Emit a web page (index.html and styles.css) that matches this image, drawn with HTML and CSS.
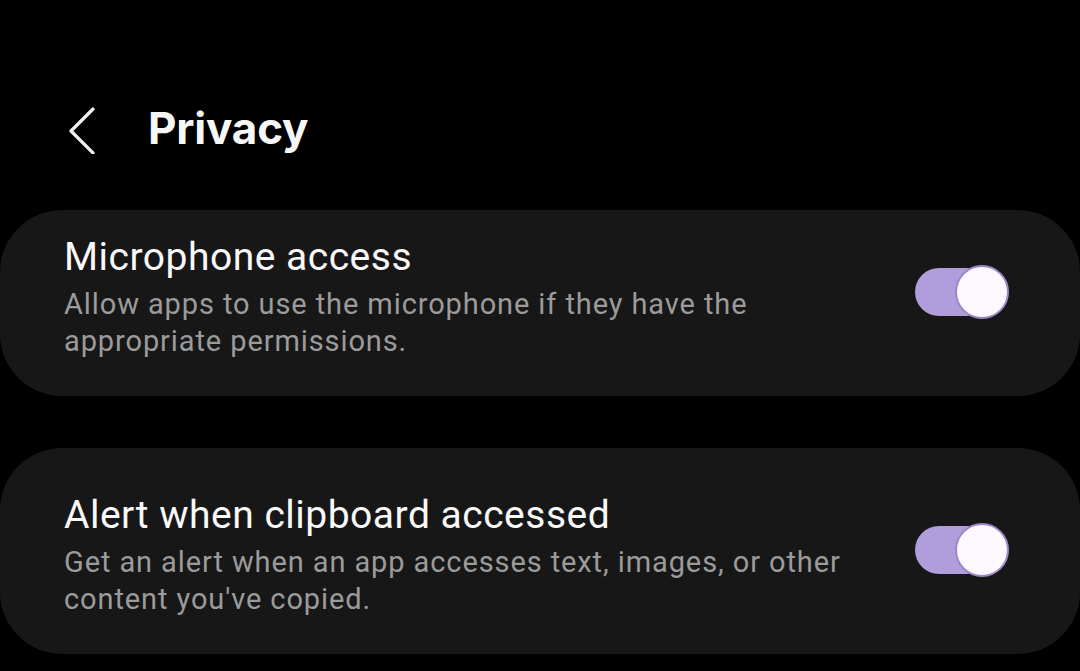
FILE: index.html
```html
<!DOCTYPE html>
<html>
<head>
<meta charset="utf-8">
<link rel="stylesheet" href="styles.css">
</head>
<body>
<div class="screen">
  <header class="topbar">
    <svg class="back" width="30" height="48" viewBox="0 0 30 48"><path d="M26 3 L4 25 L26 47" fill="none" stroke="#f2f2f2" stroke-width="3.2" stroke-linecap="round" stroke-linejoin="round"/></svg>
    <h1 class="title">Privacy</h1>
  </header>
  <div class="card card-a">
    <div class="text">
      <div class="label">Microphone access</div>
      <div class="desc">Allow apps to use the microphone if they have the appropriate permissions.</div>
    </div>
    <div class="switch"><div class="thumb"></div></div>
  </div>
  <div class="card card-b">
    <div class="text">
      <div class="label">Alert when clipboard accessed</div>
      <div class="desc">Get an alert when an app accesses text, images, or other content you've copied.</div>
    </div>
    <div class="switch"><div class="thumb"></div></div>
  </div>
</div>
</body>
</html>
```
FILE: styles.css
```css
html, body {
  margin: 0;
  padding: 0;
  background: #000;
}
body {
  width: 1080px;
  height: 671px;
  overflow: hidden;
  font-family: Roboto, "Noto Sans", sans-serif;
  color: #f7f7f7;
}
.screen {
  display: flex;
  flex-direction: column;
}
.topbar {
  display: flex;
  align-items: center;
  height: 100px;
  margin-top: 78px;
  padding-left: 67px;
  margin-bottom: 32px;
}
.back {
  margin-top: 4px;
}
.title {
  margin: 0 0 0 51px;
  font-family: Inter, Roboto, sans-serif;
  font-weight: 700;
  font-size: 44px;
  letter-spacing: -0.2px;
  color: #f7f7f7;
}
.card {
  background: #171717;
  border-radius: 62px;
  display: flex;
  align-items: center;
  padding-left: 64px;
  padding-right: 70px;
}
.card-a {
  height: 186px;
}
.card-b {
  margin-top: 52px;
  height: 206px;
}
.text {
  flex: 1;
}
.label {
  font-size: 39px;
  line-height: 46px;
  letter-spacing: 0.5px;
  padding-bottom: 6px;
  color: #f9f9f9;
}
.desc {
  font-size: 29px;
  line-height: 37px;
  letter-spacing: 0.9px;
  color: #9b9b9b;
  max-width: 800px;
}
.card-a .desc { max-width: 720px; }
.card-a .text { margin-top: -12px; }
.card-b .text { margin-top: 8px; }
.switch {
  position: relative;
  width: 76px;
  height: 48px;
  border-radius: 24px;
  background: #b09ddb;
  margin-right: 19px;
}
.thumb {
  position: absolute;
  left: 40px;
  top: -3px;
  width: 50px;
  height: 50px;
  border-radius: 50%;
  background: #fcf8fd;
  border: 2px solid #9c86c5;
}
.card-a .switch { margin-top: -22px; }
.card-b .switch { margin-top: -2px; }
```
